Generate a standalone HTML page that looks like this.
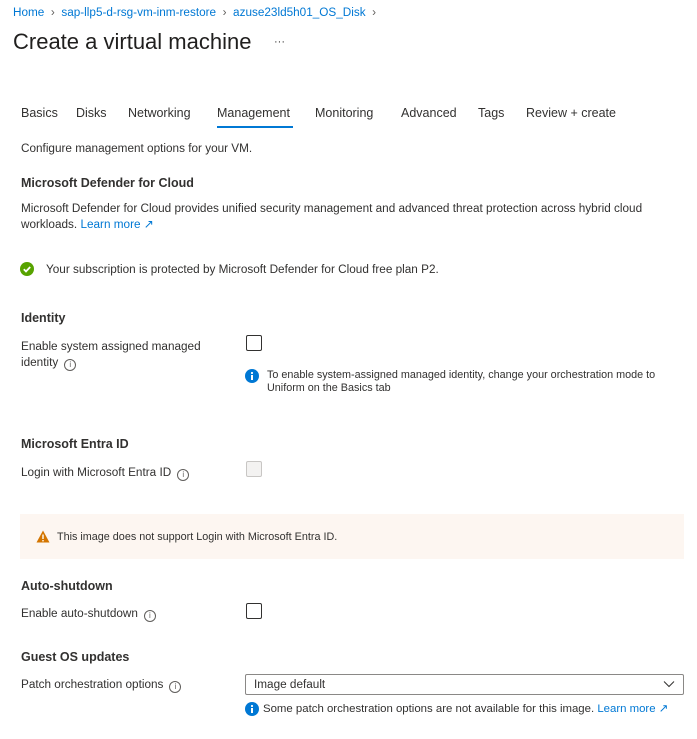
<!DOCTYPE html>
<html><head><style>
body{margin:0;width:697px;height:739px;background:#fff;font-family:"Liberation Sans",sans-serif;color:#323130;position:relative;overflow:hidden}
.a{position:absolute;white-space:nowrap;font-size:11.75px;line-height:16px}
.b{color:#0078d4}
.h{font-size:12.5px;font-weight:bold;color:#323130}
.cb{position:absolute;width:14px;height:14px;border:1px solid #323130;border-radius:2px}
.i{display:inline-block;width:10px;height:10px;border:1px solid #605e5c;border-radius:50%;font-size:8px;line-height:10px;text-align:center;color:#605e5c;margin-left:6px;vertical-align:-1px}
</style></head><body>
<div class="a b" style="left:13px;top:5px">Home <span style="color:#605e5c">&nbsp;›&nbsp;</span> sap-llp5-d-rsg-vm-inm-restore <span style="color:#605e5c">&nbsp;›&nbsp;</span> azuse23ld5h01_OS_Disk <span style="color:#605e5c">&nbsp;›</span></div>
<div class="a" style="left:13px;top:29px;font-size:22px;line-height:26px;color:#201f1e">Create a virtual machine</div>
<div class="a" style="left:274px;top:34px;font-size:11px">···</div>
<div class="a" style="left:21px;top:105px;font-size:12.5px">Basics</div>
<div class="a" style="left:76px;top:105px;font-size:12.5px">Disks</div>
<div class="a" style="left:128px;top:105px;font-size:12.5px">Networking</div>
<div class="a" style="left:217px;top:105px;font-size:12.5px">Management</div>
<div style="position:absolute;left:217px;top:126px;width:76px;height:2px;background:#0078d4"></div>
<div class="a" style="left:315px;top:105px;font-size:12.5px">Monitoring</div>
<div class="a" style="left:401px;top:105px;font-size:12.5px">Advanced</div>
<div class="a" style="left:478px;top:105px;font-size:12.5px">Tags</div>
<div class="a" style="left:526px;top:105px;font-size:12.5px">Review + create</div>
<div class="a" style="left:21px;top:141px">Configure management options for your VM.</div>
<div class="a h" style="left:21px;top:175px">Microsoft Defender for Cloud</div>
<div class="a" style="left:21px;top:201px">Microsoft Defender for Cloud provides unified security management and advanced threat protection across hybrid cloud</div>
<div class="a" style="left:21px;top:217px">workloads. <span class="b">Learn more ↗</span></div>
<svg style="position:absolute;left:20px;top:262px" width="14" height="14"><circle cx="7" cy="7" r="7" fill="#57a300"/><path d="M3.8 7.2l2.2 2.2 4.2-4.4" stroke="#fff" stroke-width="1.8" fill="none"/></svg>
<div class="a" style="left:46px;top:262px">Your subscription is protected by Microsoft Defender for Cloud free plan P2.</div>
<div class="a h" style="left:21px;top:310px">Identity</div>
<div class="a" style="left:21px;top:339px">Enable system assigned managed</div>
<div class="a" style="left:21px;top:355px">identity<span class="i">i</span></div>
<div class="cb" style="left:246px;top:335px"></div>
<svg style="position:absolute;left:245px;top:369px" width="14" height="14"><circle cx="7" cy="7" r="7" fill="#0078d4"/><rect x="6" y="6" width="2" height="5" fill="#fff"/><circle cx="7" cy="4" r="1.1" fill="#fff"/></svg>
<div class="a" style="left:267px;top:369px;font-size:10.8px;line-height:13px">To enable system-assigned managed identity, change your orchestration mode to<br>Uniform on the Basics tab</div>
<div class="a h" style="left:21px;top:436px">Microsoft Entra ID</div>
<div class="a" style="left:21px;top:465px">Login with Microsoft Entra ID<span class="i">i</span></div>
<div class="cb" style="left:246px;top:461px;border-color:#c8c6c4;background:#f3f2f1"></div>
<div style="position:absolute;left:20px;top:514px;width:664px;height:45px;background:#fdf6f1"></div>
<svg style="position:absolute;left:36px;top:530px" width="14" height="13"><path d="M7 0.5L13.5 12.5H0.5Z" fill="#d47500"/><rect x="6.3" y="4.5" width="1.4" height="4.5" fill="#fff"/><rect x="6.3" y="10" width="1.4" height="1.4" fill="#fff"/></svg>
<div class="a" style="left:57px;top:529px;font-size:10.8px">This image does not support Login with Microsoft Entra ID.</div>
<div class="a h" style="left:21px;top:578px">Auto-shutdown</div>
<div class="a" style="left:21px;top:606px">Enable auto-shutdown<span class="i">i</span></div>
<div class="cb" style="left:246px;top:603px"></div>
<div class="a h" style="left:21px;top:649px">Guest OS updates</div>
<div class="a" style="left:21px;top:677px">Patch orchestration options<span class="i">i</span></div>
<div style="position:absolute;left:245px;top:674px;width:437px;height:19px;border:1px solid #8a8886;border-radius:2px"></div>
<div class="a" style="left:254px;top:677px">Image default</div>
<svg style="position:absolute;left:663px;top:680px" width="12" height="8"><path d="M1 1.5l5 5 5-5" stroke="#323130" fill="none"/></svg>
<svg style="position:absolute;left:245px;top:702px" width="14" height="14"><circle cx="7" cy="7" r="7" fill="#0078d4"/><rect x="6" y="6" width="2" height="5" fill="#fff"/><circle cx="7" cy="4" r="1.1" fill="#fff"/></svg>
<div class="a" style="left:263px;top:701px;font-size:11.4px">Some patch orchestration options are not available for this image. <span class="b">Learn more ↗</span></div>
</body></html>
